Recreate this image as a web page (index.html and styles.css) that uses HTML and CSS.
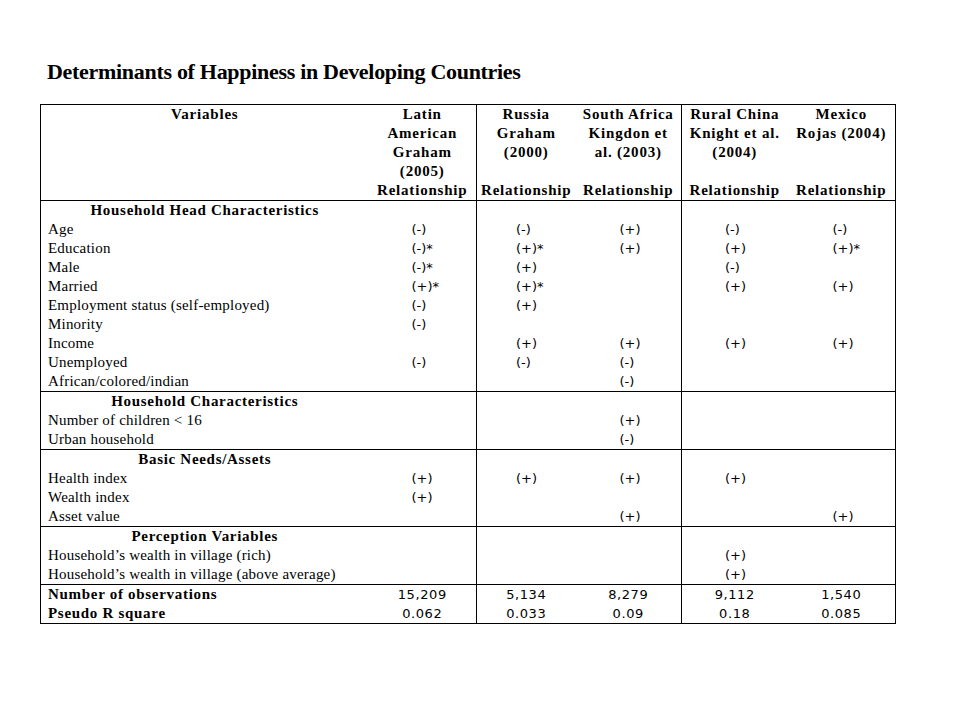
FILE: index.html
```html
<!DOCTYPE html>
<html>
<head>
<meta charset="utf-8">
<link rel="stylesheet" href="styles.css">
</head>
<body>
<div class="page">
  <h1 class="title">Determinants of Happiness in Developing Countries</h1>
  <table class="grid">
    <colgroup>
      <col class="c-var"><col class="c-latin"><col class="c-russia"><col class="c-sa"><col class="c-china"><col class="c-mexico">
    </colgroup>
    <tbody class="head">
      <tr><td class="hd center">Variables</td><td class="hd center">Latin</td><td class="hd center gsep">Russia</td><td class="hd center">South Africa</td><td class="hd center gsep">Rural China</td><td class="hd center">Mexico</td></tr>
      <tr><td></td><td class="hd center">American</td><td class="hd center gsep">Graham</td><td class="hd center">Kingdon et</td><td class="hd center gsep">Knight et al.</td><td class="hd center">Rojas (2004)</td></tr>
      <tr><td></td><td class="hd center">Graham</td><td class="hd center gsep">(2000)</td><td class="hd center">al. (2003)</td><td class="hd center gsep">(2004)</td><td></td></tr>
      <tr><td></td><td class="hd center">(2005)</td><td class="gsep"></td><td></td><td class="gsep"></td><td></td></tr>
      <tr><td></td><td class="hd center">Relationship</td><td class="hd center gsep">Relationship</td><td class="hd center">Relationship</td><td class="hd center gsep">Relationship</td><td class="hd center">Relationship</td></tr>
    </tbody>
    <tbody class="sec">
      <tr><td class="sh">Household Head Characteristics</td><td></td><td class="gsep"></td><td></td><td class="gsep"></td><td></td></tr>
      <tr><td class="lb">Age</td><td class="v v1">(-)</td><td class="v v2 gsep">(-)</td><td class="v v3">(+)</td><td class="v v4 gsep">(-)</td><td class="v v5">(-)</td></tr>
      <tr><td class="lb">Education</td><td class="v v1">(-)*</td><td class="v v2 gsep">(+)*</td><td class="v v3">(+)</td><td class="v v4 gsep">(+)</td><td class="v v5">(+)*</td></tr>
      <tr><td class="lb">Male</td><td class="v v1">(-)*</td><td class="v v2 gsep">(+)</td><td></td><td class="v v4 gsep">(-)</td><td></td></tr>
      <tr><td class="lb">Married</td><td class="v v1">(+)*</td><td class="v v2 gsep">(+)*</td><td></td><td class="v v4 gsep">(+)</td><td class="v v5">(+)</td></tr>
      <tr><td class="lb">Employment status (self-employed)</td><td class="v v1">(-)</td><td class="v v2 gsep">(+)</td><td></td><td class="gsep"></td><td></td></tr>
      <tr><td class="lb">Minority</td><td class="v v1">(-)</td><td class="gsep"></td><td></td><td class="gsep"></td><td></td></tr>
      <tr><td class="lb">Income</td><td></td><td class="v v2 gsep">(+)</td><td class="v v3">(+)</td><td class="v v4 gsep">(+)</td><td class="v v5">(+)</td></tr>
      <tr><td class="lb">Unemployed</td><td class="v v1">(-)</td><td class="v v2 gsep">(-)</td><td class="v v3">(-)</td><td class="gsep"></td><td></td></tr>
      <tr><td class="lb">African/colored/indian</td><td></td><td class="gsep"></td><td class="v v3">(-)</td><td class="gsep"></td><td></td></tr>
    </tbody>
    <tbody class="sec">
      <tr><td class="sh">Household Characteristics</td><td></td><td class="gsep"></td><td></td><td class="gsep"></td><td></td></tr>
      <tr><td class="lb">Number of children &lt; 16</td><td></td><td class="gsep"></td><td class="v v3">(+)</td><td class="gsep"></td><td></td></tr>
      <tr><td class="lb">Urban household</td><td></td><td class="gsep"></td><td class="v v3">(-)</td><td class="gsep"></td><td></td></tr>
    </tbody>
    <tbody class="sec">
      <tr><td class="sh">Basic Needs/Assets</td><td></td><td class="gsep"></td><td></td><td class="gsep"></td><td></td></tr>
      <tr><td class="lb">Health index</td><td class="v v1">(+)</td><td class="v v2 gsep">(+)</td><td class="v v3">(+)</td><td class="v v4 gsep">(+)</td><td></td></tr>
      <tr><td class="lb">Wealth index</td><td class="v v1">(+)</td><td class="gsep"></td><td></td><td class="gsep"></td><td></td></tr>
      <tr><td class="lb">Asset value</td><td></td><td class="gsep"></td><td class="v v3">(+)</td><td class="gsep"></td><td class="v v5">(+)</td></tr>
    </tbody>
    <tbody class="sec">
      <tr><td class="sh">Perception Variables</td><td></td><td class="gsep"></td><td></td><td class="gsep"></td><td></td></tr>
      <tr><td class="lb">Household’s wealth in village (rich)</td><td></td><td class="gsep"></td><td></td><td class="v v4 gsep">(+)</td><td></td></tr>
      <tr><td class="lb">Household’s wealth in village (above average)</td><td></td><td class="gsep"></td><td></td><td class="v v4 gsep">(+)</td><td></td></tr>
    </tbody>
    <tbody class="sec">
      <tr><td class="lb bold">Number of observations</td><td class="num">15,209</td><td class="num gsep">5,134</td><td class="num">8,279</td><td class="num gsep">9,112</td><td class="num">1,540</td></tr>
      <tr><td class="lb bold">Pseudo R square</td><td class="num">0.062</td><td class="num gsep">0.033</td><td class="num">0.09</td><td class="num gsep">0.18</td><td class="num">0.085</td></tr>
    </tbody>
  </table>
</div>
</body>
</html>
```

FILE: styles.css
```css
html, body {
  margin: 0;
  padding: 0;
  background: #ffffff;
}

.page {
  padding: 58px 0 0 40px;
  color: #000;
  font-family: "Liberation Serif", "Times New Roman", serif;
}

.title {
  margin: 0 0 18px 7px;
  font-size: 22px;
  line-height: 28px;
  font-weight: bold;
  letter-spacing: -0.3px;
}

.grid {
  border-collapse: collapse;
  table-layout: fixed;
  width: 855px;
  border: 1.5px solid #000;
}

.c-var { width: 328px; }
.c-latin { width: 108px; }
.c-russia { width: 99px; }
.c-sa { width: 106px; }
.c-china { width: 106px; }
.c-mexico { width: 108px; }

.grid td {
  padding: 0;
  height: 19px;
  line-height: 19px;
  font-size: 15px;
  letter-spacing: 0.2px;
  white-space: nowrap;
  vertical-align: middle;
}

.gsep { border-left: 1.5px solid #000; }

.sec tr:first-child td { border-top: 1px solid #000; }

.hd {
  font-weight: bold;
  letter-spacing: 0.8px !important;
}
.center { text-align: center; }

.sh {
  font-weight: bold;
  text-align: center;
  letter-spacing: 0.7px !important;
}

.lb { padding-left: 7px !important; }
.bold {
  font-weight: bold;
  letter-spacing: 0.7px !important;
}

.v, .num {
  font-family: "DejaVu Sans", Verdana, sans-serif;
  font-size: 13px !important;
  letter-spacing: 0 !important;
}

.num { letter-spacing: 0.6px !important; }

.v1 { padding-left: 43px !important; }
.v2 { padding-left: 39px !important; }
.v3 { padding-left: 44px !important; }
.v4 { padding-left: 43px !important; }
.v5 { padding-left: 45px !important; }

.num { text-align: center; }
```
